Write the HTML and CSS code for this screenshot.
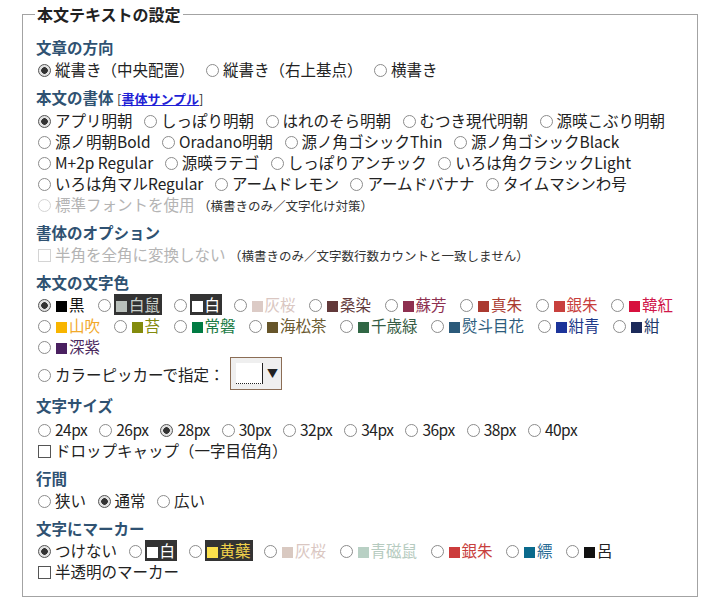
FILE: index.html
```html
<!DOCTYPE html>
<html lang="ja">
<head>
    <meta charset="UTF-8">
    <meta name="viewport" content="width=device-width, initial-scale=1.0">
    <title>本文テキストの設定</title>
    <link rel="stylesheet" href="styles.css">
</head>
<body>
    <fieldset class="settings">
        <legend>本文テキストの設定</legend>

        <div class="group">
            <h3>文章の方向</h3>
            <div class="row">
                <label class="opt"><input type="radio" name="dir" checked>縦書き（中央配置）</label>
                <label class="opt"><input type="radio" name="dir">縦書き（右上基点）</label>
                <label class="opt"><input type="radio" name="dir">横書き</label>
            </div>
        </div>

        <div class="group">
            <h3>本文の書体 <span class="bracket">[<a href="#">書体サンプル</a>]</span></h3>
            <div class="row">
                <label class="opt"><input type="radio" name="font" checked>アプリ明朝</label>
                <label class="opt"><input type="radio" name="font">しっぽり明朝</label>
                <label class="opt"><input type="radio" name="font">はれのそら明朝</label>
                <label class="opt"><input type="radio" name="font">むつき現代明朝</label>
                <label class="opt"><input type="radio" name="font">源暎こぶり明朝</label>
            </div>
            <div class="row">
                <label class="opt"><input type="radio" name="font">源ノ明朝Bold</label>
                <label class="opt"><input type="radio" name="font">Oradano明朝</label>
                <label class="opt"><input type="radio" name="font">源ノ角ゴシックThin</label>
                <label class="opt"><input type="radio" name="font">源ノ角ゴシックBlack</label>
            </div>
            <div class="row">
                <label class="opt"><input type="radio" name="font">M+2p Regular</label>
                <label class="opt"><input type="radio" name="font">源暎ラテゴ</label>
                <label class="opt"><input type="radio" name="font">しっぽりアンチック</label>
                <label class="opt"><input type="radio" name="font">いろは角クラシックLight</label>
            </div>
            <div class="row">
                <label class="opt"><input type="radio" name="font">いろは角マルRegular</label>
                <label class="opt"><input type="radio" name="font">アームドレモン</label>
                <label class="opt"><input type="radio" name="font">アームドバナナ</label>
                <label class="opt"><input type="radio" name="font">タイムマシンわ号</label>
            </div>
            <div class="row">
                <label class="opt disabled"><input type="radio" name="font" disabled>標準フォントを使用</label>
                <span class="note">（横書きのみ／文字化け対策）</span>
            </div>
        </div>

        <div class="group">
            <h3>書体のオプション</h3>
            <div class="row">
                <label class="opt disabled"><input type="checkbox" disabled>半角を全角に変換しない</label>
                <span class="note">（横書きのみ／文字数行数カウントと一致しません）</span>
            </div>
        </div>

        <div class="group">
            <h3>本文の文字色</h3>
            <div class="row">
                <label class="opt"><input type="radio" name="color" checked><span class="color" style="color:#111"><i class="sw" style="background:#000"></i>黒</span></label>
                <label class="opt"><input type="radio" name="color"><span class="color dark" style="color:#c9d0cb"><i class="sw" style="background:#b9c0bb"></i>白鼠</span></label>
                <label class="opt"><input type="radio" name="color"><span class="color dark" style="color:#fff"><i class="sw" style="background:#fff"></i>白</span></label>
                <label class="opt"><input type="radio" name="color"><span class="color" style="color:#dac7c2"><i class="sw" style="background:#dccbc6"></i>灰桜</span></label>
                <label class="opt"><input type="radio" name="color"><span class="color" style="color:#62393a"><i class="sw" style="background:#62393a"></i>桑染</span></label>
                <label class="opt"><input type="radio" name="color"><span class="color" style="color:#8e3050"><i class="sw" style="background:#8e3050"></i>蘇芳</span></label>
                <label class="opt"><input type="radio" name="color"><span class="color" style="color:#aa3a30"><i class="sw" style="background:#aa3a30"></i>真朱</span></label>
                <label class="opt"><input type="radio" name="color"><span class="color" style="color:#c8403d"><i class="sw" style="background:#c8403d"></i>銀朱</span></label>
                <label class="opt"><input type="radio" name="color"><span class="color" style="color:#d0184a"><i class="sw" style="background:#d7103e"></i>韓紅</span></label>
            </div>
            <div class="row">
                <label class="opt"><input type="radio" name="color"><span class="color" style="color:#f2a92a"><i class="sw" style="background:#f8b500"></i>山吹</span></label>
                <label class="opt"><input type="radio" name="color"><span class="color" style="color:#838b0d"><i class="sw" style="background:#838b0d"></i>苔</span></label>
                <label class="opt"><input type="radio" name="color"><span class="color" style="color:#1a7b45"><i class="sw" style="background:#007b43"></i>常磐</span></label>
                <label class="opt"><input type="radio" name="color"><span class="color" style="color:#6b5a30"><i class="sw" style="background:#66552a"></i>海松茶</span></label>
                <label class="opt"><input type="radio" name="color"><span class="color" style="color:#355c44"><i class="sw" style="background:#316745"></i>千歳緑</span></label>
                <label class="opt"><input type="radio" name="color"><span class="color" style="color:#2d5c7c"><i class="sw" style="background:#2b5a7a"></i>熨斗目花</span></label>
                <label class="opt"><input type="radio" name="color"><span class="color" style="color:#1e3a8a"><i class="sw" style="background:#1c349a"></i>紺青</span></label>
                <label class="opt"><input type="radio" name="color"><span class="color" style="color:#223a6a"><i class="sw" style="background:#1c2a5a"></i>紺</span></label>
            </div>
            <div class="row">
                <label class="opt"><input type="radio" name="color"><span class="color" style="color:#4b2a60"><i class="sw" style="background:#4a2060"></i>深紫</span></label>
            </div>
            <div class="row picker-row">
                <label class="opt"><input type="radio" name="color">カラーピッカーで指定：</label>
                <span class="picker"><span class="picker-well"></span><span class="picker-arrow">▼</span></span>
            </div>
        </div>

        <div class="group">
            <h3>文字サイズ</h3>
            <div class="row sizes">
                <label class="opt"><input type="radio" name="size">24px</label>
                <label class="opt"><input type="radio" name="size">26px</label>
                <label class="opt"><input type="radio" name="size" checked>28px</label>
                <label class="opt"><input type="radio" name="size">30px</label>
                <label class="opt"><input type="radio" name="size">32px</label>
                <label class="opt"><input type="radio" name="size">34px</label>
                <label class="opt"><input type="radio" name="size">36px</label>
                <label class="opt"><input type="radio" name="size">38px</label>
                <label class="opt"><input type="radio" name="size">40px</label>
            </div>
            <div class="row">
                <label class="opt"><input type="checkbox">ドロップキャップ（一字目倍角）</label>
            </div>
        </div>

        <div class="group">
            <h3>行間</h3>
            <div class="row">
                <label class="opt"><input type="radio" name="lh">狭い</label>
                <label class="opt"><input type="radio" name="lh" checked>通常</label>
                <label class="opt"><input type="radio" name="lh">広い</label>
            </div>
        </div>

        <div class="group">
            <h3>文字にマーカー</h3>
            <div class="row">
                <label class="opt"><input type="radio" name="marker" checked>つけない</label>
                <label class="opt"><input type="radio" name="marker"><span class="color dark" style="color:#fff"><i class="sw" style="background:#fff"></i>白</span></label>
                <label class="opt"><input type="radio" name="marker"><span class="color dark" style="color:#f0d04a"><i class="sw" style="background:#fbe04c"></i>黄蘗</span></label>
                <label class="opt"><input type="radio" name="marker"><span class="color" style="color:#dac7c2"><i class="sw" style="background:#d9c9c1"></i>灰桜</span></label>
                <label class="opt"><input type="radio" name="marker"><span class="color" style="color:#b6cbc0"><i class="sw" style="background:#b8d0c4"></i>青磁鼠</span></label>
                <label class="opt"><input type="radio" name="marker"><span class="color" style="color:#c8403d"><i class="sw" style="background:#cc3c3c"></i>銀朱</span></label>
                <label class="opt"><input type="radio" name="marker"><span class="color" style="color:#2a6c96"><i class="sw" style="background:#0a6a8c"></i>縹</span></label>
                <label class="opt"><input type="radio" name="marker"><span class="color" style="color:#222"><i class="sw" style="background:#111"></i>呂</span></label>
            </div>
            <div class="row">
                <label class="opt"><input type="checkbox">半透明のマーカー</label>
            </div>
        </div>
    </fieldset>
</body>
</html>
```

FILE: styles.css
```css
:root {
    --heading-color: #2f5272;
    --text-color: #222;
    --border-color: #a3a3a3;
    --radio-border: #8c8c8c;
    --disabled-color: #b4b4b4;
    --dark-bg: #333;
}
body {
    margin: 3px 0 0 22px;
    font-family: "Noto Sans CJK JP", "Noto Sans", sans-serif;
    font-size: 15.5px;
    color: var(--text-color);
    background: #fff;
}
.settings {
    box-sizing: border-box;
    width: 676px;
    margin: 0;
    padding: 11px 10px 14px 13px;
    border: 1px solid var(--border-color);
}
.settings legend {
    padding: 0 2px;
    margin-left: -1px;
    font-size: 16px;
    font-weight: bold;
    line-height: 22px;
    color: #222;
}
.group {
    margin-top: 6px;
}
.group:first-of-type {
    margin-top: 0;
}
h3 {
    margin: 0;
    font-size: 15.5px;
    font-weight: bold;
    line-height: 23px;
    color: var(--heading-color);
}
.bracket {
    font-size: 13px;
    color: #333;
    font-weight: normal;
}
.bracket a {
    color: #1f1fd6;
    font-weight: bold;
    text-decoration: underline;
}
.row {
    line-height: 21px;
    height: 21px;
    white-space: nowrap;
    padding-left: 2px;
}
.opt {
    margin-right: 8px;
}
.opt.disabled {
    color: var(--disabled-color);
    margin-right: 0;
}
.note {
    font-size: 12.5px;
    color: #333;
}
.sizes {
    margin-top: 2px;
    letter-spacing: -0.5px;
}
.sizes .opt {
    margin-right: 9px;
}

/* radios and checkboxes */
input[type="radio"], input[type="checkbox"] {
    appearance: none;
    -webkit-appearance: none;
    box-sizing: border-box;
    display: inline-block;
    width: 13px;
    height: 13px;
    margin: 0 4px 0 0;
    vertical-align: -1px;
    background: #fff;
}
input[type="radio"] {
    border: 1.5px solid var(--radio-border);
    border-radius: 50%;
}
input[type="radio"]:checked {
    border-color: #555;
    background: radial-gradient(circle, #333 0 3px, #e2e2e2 3.6px);
}
input[type="checkbox"] {
    border: 1.5px solid #555;
}
input:disabled {
    border-color: #d4d4d4;
}

/* colour samples */
.color {
    display: inline-block;
    height: 21px;
    padding: 0 2px 0 2px;
    margin-left: -1px;
    vertical-align: top;
}
.color.dark {
    background: var(--dark-bg);
}
.sw {
    display: inline-block;
    width: 11px;
    height: 11px;
    margin-right: 2px;
    vertical-align: -1px;
}

/* colour picker */
.picker-row {
    height: 34px;
    line-height: 34px;
    margin-bottom: -3px;
}
.picker {
    display: inline-flex;
    align-items: center;
    box-sizing: border-box;
    width: 52px;
    height: 33px;
    margin-left: -6px;
    padding-left: 5px;
    vertical-align: top;
    border: 1px solid #8b6d55;
    background: #efefef;
}
.picker-well {
    box-sizing: border-box;
    width: 27px;
    height: 21px;
    background: #fff;
    border-right: 1px solid #222;
    border-bottom: 1px dotted #222;
}
.picker-arrow {
    margin-left: 4px;
    font-size: 11px;
    line-height: 1;
    color: #222;
}
```
